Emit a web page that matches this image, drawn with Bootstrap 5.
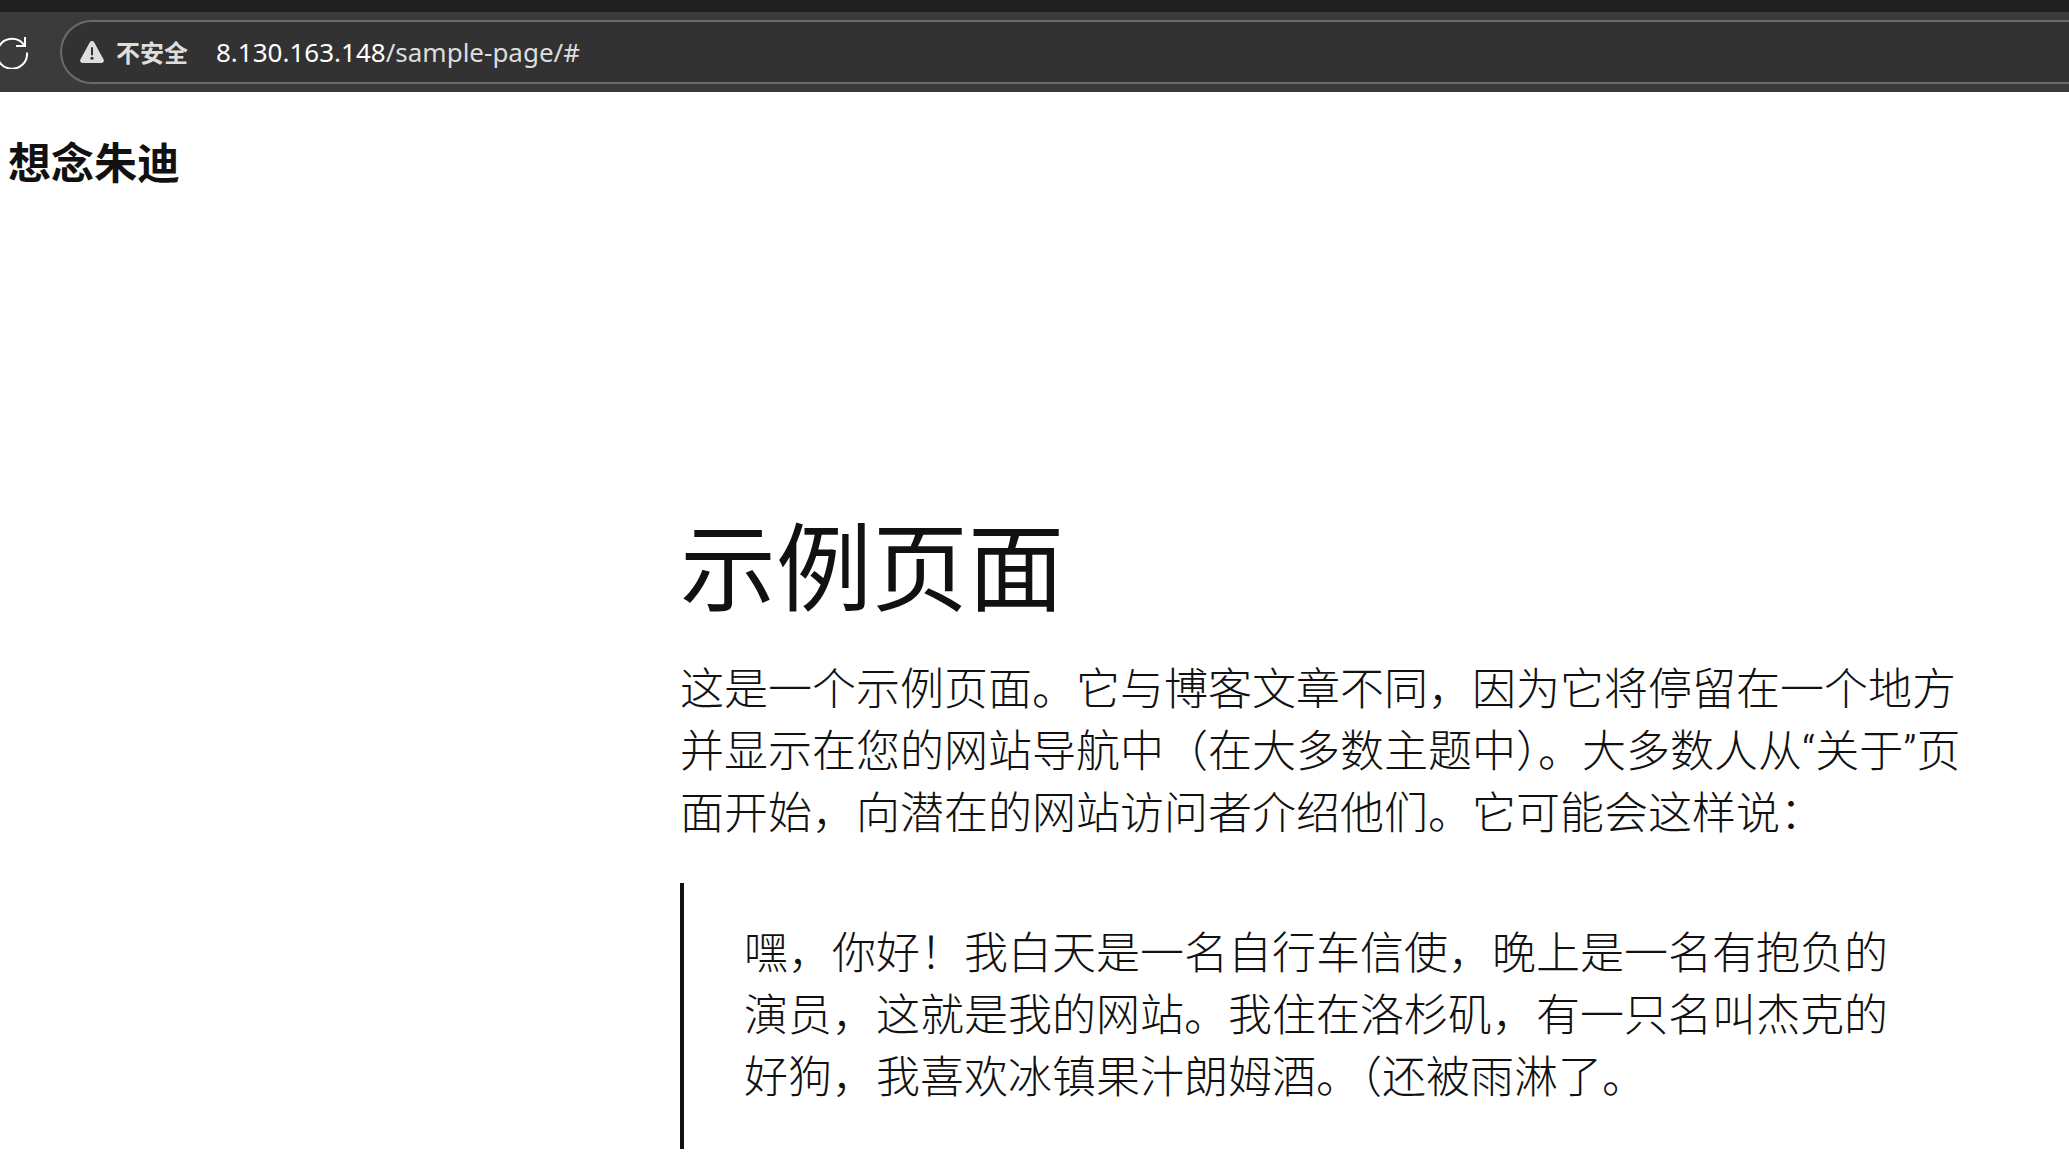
<!DOCTYPE html>
<html lang="zh-CN">
<head>
<meta charset="utf-8">
<meta name="viewport" content="width=device-width, initial-scale=1">
<title>示例页面</title>
<link rel="stylesheet" href="https://cdn.jsdelivr.net/npm/bootstrap@5.3.0/dist/css/bootstrap.min.css">
<style>
body { font-family: "Open Sans", "Noto Sans CJK SC", sans-serif; color: #111; overflow: hidden; }
.tab-strip { height: 12px; background: #202020; }
.toolbar { height: 80px; background: #3b3b3b; padding-top: 8px; }
.reload-btn { width: 28px; height: 64px; }
.address-bar { height: 64px; margin-left: 32px; margin-right: -40px; padding-left: 18px; background: #323232; border: 2px solid #6b6b6b; border-radius: 32px; }
.security-btn { gap: 12px; color: #dedede; font: 700 24px/32px "Noto Sans CJK SC", sans-serif; }
.address-text { margin-left: 28px; color: #dedede; font: 400 26px/36px "Noto Sans", sans-serif; outline: 0; }
.site-title { padding: 36px 8px; font: 700 43px/64px "Noto Sans CJK SC", sans-serif; }
.article-body { max-width: 1290px; margin-right: 99px; padding-top: 262px; }
.page-title { margin-bottom: 25px; font: 400 96px/144px "Noto Sans CJK SC", sans-serif; }
.article-body p { font-size: 44px; line-height: 62px; font-weight: 300; font-family: "Roboto", "Noto Sans CJK SC", sans-serif; }
.intro-text { margin-bottom: 38px; }
.quote-box { border-left: 4px solid #111; padding: 40px 60px; }
</style>
<script src="https://cdn.jsdelivr.net/npm/bootstrap@5.3.0/dist/js/bootstrap.bundle.min.js"></script>
</head>
<body>
<div class="tab-strip"></div>
<div class="toolbar d-flex">
  <button type="button" class="reload-btn btn p-0 border-0 rounded-0 d-flex align-items-center flex-shrink-0" aria-label="刷新">
    <svg width="28" height="34" viewBox="0 0 28 34" fill="none" stroke="#fff" stroke-width="2"><path d="M24.200 10A15 15 0 1 0 27 17.500M25 2v9h-9"/></svg>
  </button>
  <div class="address-bar d-flex align-items-center flex-grow-1">
    <button type="button" class="security-btn btn p-0 border-0 d-flex align-items-center">
      <svg width="24" height="22" viewBox="0 0 24 22"><path fill="#dedede" d="M9.700 1.400a2.600 2.600 0 0 1 4.600 0l9.300 17A2.500 2.500 0 0 1 21.400 22H2.600A2.500 2.500 0 0 1 .4 18.400z"/><path d="M12 7v6.500" stroke="#323232" stroke-width="2" stroke-linecap="round"/><circle cx="12" cy="17.200" r="1.500" fill="#323232"/></svg>
      <span>不安全</span>
    </button>
    <div class="address-text" role="textbox" contenteditable="true" spellcheck="false" aria-label="地址栏"><span class="text-white">8.130.163.148</span>/sample-page/#</div>
  </div>
</div>
<header><h2 class="site-title m-0"><a href="#" class="text-reset text-decoration-none">想念朱迪</a></h2></header>
<main class="article-body ms-auto">
  <h1 class="page-title">示例页面</h1>
  <p class="intro-text">这是一个示例页面。它与博客文章不同，因为它将停留在一个地方并显示在您的网站导航中（在大多数主题中）。大多数人从“关于”页面开始，向潜在的网站访问者介绍他们。它可能会这样说：</p>
  <blockquote class="quote-box m-0">
    <p class="m-0">嘿，你好！我白天是一名自行车信使，晚上是一名有抱负的演员，这就是我的网站。我住在洛杉矶，有一只名叫杰克的好狗，我喜欢冰镇果汁朗姆酒。（还被雨淋了。</p>
  </blockquote>
</main>
</body>
</html>
